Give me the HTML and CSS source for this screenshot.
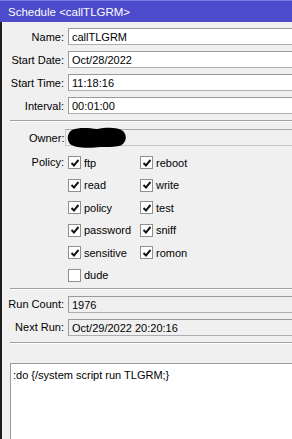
FILE: index.html
```html
<!DOCTYPE html>
<html lang="en">
<head>
    <meta charset="UTF-8">
    <meta name="viewport" content="width=device-width, initial-scale=1.0">
    <title>Schedule &lt;callTLGRM&gt;</title>
    <link rel="stylesheet" href="styles.css">
</head>
<body>

    <div class="window">
        <div class="titlebar">Schedule &lt;callTLGRM&gt;</div>

        <div class="content">
            <div class="row">
                <label class="label">Name:</label>
                <div class="field">callTLGRM</div>
            </div>
            <div class="row">
                <label class="label">Start Date:</label>
                <div class="field">Oct/28/2022</div>
            </div>
            <div class="row">
                <label class="label">Start Time:</label>
                <div class="field">11:18:16</div>
            </div>
            <div class="row">
                <label class="label">Interval:</label>
                <div class="field">00:01:00</div>
            </div>

            <div class="sep sep-top"></div>

            <div class="row owner-row">
                <label class="label owner-label">Owner:</label>
                <div class="field flat"></div>
                <svg class="blob" width="60" height="21" viewBox="0 0 60 21">
                    <path d="M5 3 C12 0 22 1 30 2 C40 0 51 0 56 4 C60 8 60 15 54 18.5 C44 21 34 19.5 28 20.5 C18 21 8 21 3 17 C-0.5 13 0 6 5 3 Z" fill="#000"/>
                </svg>
            </div>

            <div class="policy">
                <label class="label policy-label">Policy:</label>
                <div class="checks" id="checks"></div>
            </div>

            <div class="sep sep-mid"></div>

            <div class="row">
                <label class="label">Run Count:</label>
                <div class="field readonly">1976</div>
            </div>
            <div class="row">
                <label class="label">Next Run:</label>
                <div class="field readonly">Oct/29/2022 20:20:16</div>
            </div>

            <div class="sep sep-bottom"></div>

            <div class="source">:do {/system script run TLGRM;}</div>
        </div>
    </div>

    <script>
        const policies = [
            { name: "ftp", on: true }, { name: "reboot", on: true },
            { name: "read", on: true }, { name: "write", on: true },
            { name: "policy", on: true }, { name: "test", on: true },
            { name: "password", on: true }, { name: "sniff", on: true },
            { name: "sensitive", on: true }, { name: "romon", on: true },
            { name: "dude", on: false }
        ];

        const tick = '<svg width="8" height="8" viewBox="0 0 8 8"><path d="M0.5 4 L3 6.5 L7.5 1" fill="none" stroke="#151515" stroke-width="2"/></svg>';

        let checks = document.getElementById("checks");
        policies.forEach(p => {
            let item = document.createElement("div");
            item.className = "check";
            item.innerHTML = `<span class="box">${p.on ? tick : ""}</span><span>${p.name}</span>`;
            checks.appendChild(item);
        });
    </script>

</body>
</html>
```

FILE: styles.css
```css
body {
    margin: 0;
    overflow: hidden;
    font-family: "Liberation Sans", Arial, sans-serif;
    font-size: 11px;
    color: #000;
    background: #f0f0f0;
}
.window {
    height: 439px;
    background: #f0f0f0;
}
.titlebar {
    height: 22px;
    box-sizing: border-box;
    padding: 5px 0 0 8px;
    background: #4b4bcb;
    border-top: 1px solid #7a7ae0;
    color: #fff;
    font-size: 11.5px;
}
.content {
    border-left: 2px solid #1e1e1e;
    height: 417px;
    box-sizing: border-box;
    padding-top: 6px;
}
.row {
    display: flex;
    align-items: center;
    height: 17px;
    margin-bottom: 6px;
}
.label {
    width: 62px;
    flex: none;
    text-align: right;
    padding-right: 4px;
}
.field {
    flex: 1;
    height: 17px;
    box-sizing: border-box;
    margin-right: -10px;
    padding: 1px 0 0 3px;
    background: #fff;
    border: 1px solid #abadb3;
    border-top-color: #9a9a9a;
    border-left-color: #9a9a9a;
    line-height: 14px;
}
.field.readonly {
    background: #f0f0f0;
}
.field.flat {
    background: #f0f0f0;
    border-color: #c8c8c8;
    border-top-color: #a8a8a8;
}
.sep {
    margin-left: 8px;
    height: 1px;
    background: #a0a0a0;
    border-bottom: 1px solid #fff;
}
.sep-top {
    margin-top: 2px;
    margin-bottom: 7px;
}
.owner-row {
    position: relative;
    margin-bottom: 8px;
}
.owner-label {
    width: 36px;
    padding-right: 0;
    margin-left: 27px;
    text-align: left;
}
.blob {
    position: absolute;
    left: 65px;
    top: -2px;
}
.policy {
    display: flex;
}
.policy-label {
    padding-top: 2px;
}
.checks {
    display: grid;
    grid-template-columns: 72px 80px;
    row-gap: 5.6px;
}
.check {
    display: flex;
    align-items: center;
    height: 17px;
    gap: 3px;
}
.box {
    width: 11px;
    height: 11px;
    background: #fff;
    border: 1px solid #8e8f8f;
    display: flex;
    align-items: center;
    justify-content: center;
}
.sep-mid {
    margin-top: 4px;
    margin-bottom: 6px;
}
.sep-bottom {
    margin-top: 4px;
}
.source {
    margin: 19px -10px 0 8px;
    height: 80px;
    background: #fff;
    border: 1px solid #9a9a9a;
    padding: 5px 2px;
}
```
